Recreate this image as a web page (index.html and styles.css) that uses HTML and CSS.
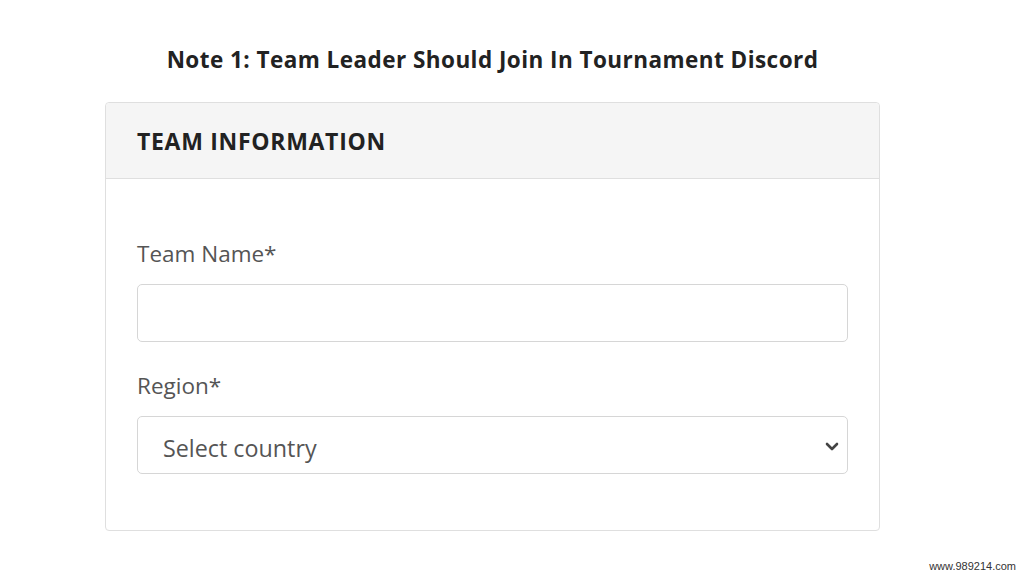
FILE: index.html
```html
<!DOCTYPE html>
<html lang="en">
<head>
  <meta charset="UTF-8" />
  <meta name="viewport" content="width=device-width, initial-scale=1.0" />
  <title>Team Registration</title>
  <link rel="stylesheet" href="styles.css">
</head>
<body>
  <div class="wrapper">
    <h3 class="note">Note 1: Team Leader Should Join In Tournament Discord</h3>

    <div class="card">
      <div class="card-header">TEAM INFORMATION</div>
      <div class="card-body">
        <div class="form-group">
          <label for="team-name">Team Name*</label>
          <input type="text" id="team-name" />
        </div>
        <div class="form-group">
          <label for="region">Region*</label>
          <div class="select-wrap">
            <select id="region">
              <option>Select country</option>
            </select>
            <svg class="chevron" width="14" height="9" viewBox="0 0 14 9">
              <path d="M2 2l5 5 5-5" fill="none" stroke="#444" stroke-width="2.6" stroke-linecap="round" stroke-linejoin="round"/>
            </svg>
          </div>
        </div>
      </div>
    </div>
  </div>

  <div class="watermark">www.989214.com</div>
</body>
</html>
```

FILE: styles.css
```css
* {
  box-sizing: border-box;
}
body {
  margin: 0;
  font-family: "Open Sans", Arial, sans-serif;
  background: #fff;
  color: #333;
  height: 576px;
  overflow: hidden;
  position: relative;
}
.wrapper {
  width: 775px;
  margin-left: 105px;
  padding-top: 43px;
}
.note {
  margin: 0 0 25px;
  font-size: 22.5px;
  font-weight: 700;
  letter-spacing: 0.45px;
  line-height: 34px;
  text-align: center;
  color: #222;
}
.card {
  border: 1px solid #dfdfdf;
  border-radius: 4px;
  background: #fff;
}
.card-header {
  height: 76px;
  display: flex;
  align-items: center;
  padding: 0 31px;
  background: #f5f5f5;
  border-bottom: 1px solid #dfdfdf;
  border-radius: 4px 4px 0 0;
  font-size: 23px;
  font-weight: 700;
  letter-spacing: 0.7px;
  color: #222;
}
.card-body {
  padding: 61px 31px 56px;
  display: flex;
  flex-direction: column;
  gap: 30px;
}
.form-group {
  display: flex;
  flex-direction: column;
  gap: 16px;
}
.form-group label {
  font-size: 22.5px;
  line-height: 28px;
  color: #555;
}
.form-group input,
.form-group select {
  width: 100%;
  height: 58px;
  border: 1px solid #d6d6d6;
  border-radius: 5px;
  background: #fff;
  outline: none;
  font-family: inherit;
  font-size: 23.3px;
  color: #555;
}
.form-group input {
  padding: 0 24px;
}
.select-wrap {
  position: relative;
}
.form-group select {
  display: block;
  appearance: none;
  -webkit-appearance: none;
  padding: 5px 25px 0;
}
.chevron {
  position: absolute;
  right: 9px;
  top: 26px;
}
.watermark {
  position: absolute;
  right: 8px;
  bottom: 4px;
  font-family: "Liberation Sans", Arial, sans-serif;
  font-size: 11px;
  color: #333;
}
```
